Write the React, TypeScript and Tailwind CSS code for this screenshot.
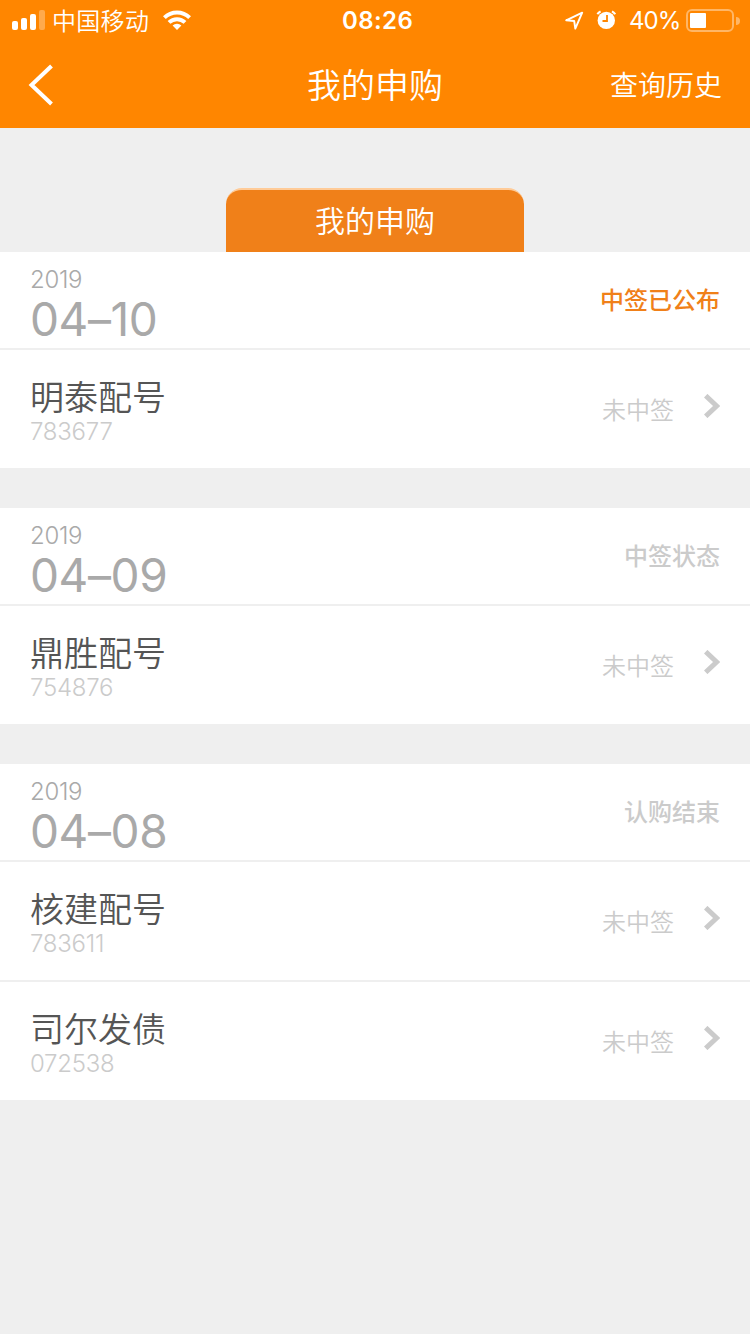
import React from "react";

type Item = {
  name: string;
  code: string;
  result: string;
};

type Group = {
  year: string;
  day: string;
  status: string;
  active?: boolean;
  items: Item[];
};

const groups: Group[] = [
  {
    year: "2019",
    day: "04–10",
    status: "中签已公布",
    active: true,
    items: [{ name: "明泰配号", code: "783677", result: "未中签" }],
  },
  {
    year: "2019",
    day: "04–09",
    status: "中签状态",
    items: [{ name: "鼎胜配号", code: "754876", result: "未中签" }],
  },
  {
    year: "2019",
    day: "04–08",
    status: "认购结束",
    items: [
      { name: "核建配号", code: "783611", result: "未中签" },
      { name: "司尔发债", code: "072538", result: "未中签" },
    ],
  },
];

function StatusBar() {
  return (
    <div className="grid h-10 grid-cols-[342px_1fr_186px] items-center">
      <div className="flex items-center pl-3">
        <svg width="33" height="20" viewBox="0 0 33 20" fill="#fff">
          <rect x="0" y="11" width="6" height="9" rx="2" />
          <rect x="9" y="8" width="6" height="12" rx="2" />
          <rect x="18" y="4" width="6" height="16" rx="2" />
          <rect x="27" y="0" width="6" height="20" rx="2" opacity="0.3" />
        </svg>
        <span className="ml-[7px] pt-1 text-2xl leading-9 font-[350] tracking-[0.3px]">
          中国移动
        </span>
        <svg className="ml-3.5" width="28" height="20" viewBox="0 0 28 20">
          <g fill="none" stroke="#fff" strokeWidth="4">
            <path d="M1.4 7.6a18 18 0 0 1 25.2 0" />
            <path d="M6 12.4a11.5 11.5 0 0 1 16 0" />
          </g>
          <path d="M14 20l-4.4-4.4a6.3 6.3 0 0 1 8.8 0z" fill="#fff" />
        </svg>
      </div>

      <div className="pt-0.5 text-2xl leading-[38px] font-semibold tracking-[0.4px]">
        08:26
      </div>

      <div className="flex items-center">
        <svg className="shrink-0" width="20" height="20" viewBox="0 0 20 20">
          <path
            d="M2.2 10.3L18.2 2.7L11.3 18.6L10.2 11Z"
            fill="none"
            stroke="#fff"
            strokeWidth="1.9"
            strokeLinejoin="round"
          />
        </svg>
        <svg
          className="ml-3 shrink-0"
          width="20"
          height="20"
          viewBox="0 0 20 20"
        >
          <circle cx="10.3" cy="10.4" r="8.7" fill="#fff" />
          <path
            d="M1.3 4.2A12 12 0 0 1 4.6 1.4M16 1.4A12 12 0 0 1 19.3 4.2"
            fill="none"
            stroke="#fff"
            strokeWidth="2"
          />
          <path
            d="M11 5V11H6.5"
            fill="none"
            stroke="#ff8600"
            strokeWidth="1.8"
          />
        </svg>
        <span className="ml-[13px] w-[57px] pt-0.5 text-2xl leading-[38px] tracking-[-1px]">
          40%
        </span>
        <svg className="shrink-0" width="54" height="24" viewBox="0 0 54 24">
          <rect
            x="1"
            y="2"
            width="46"
            height="21"
            rx="5"
            fill="none"
            stroke="#fff"
            strokeOpacity="0.4"
            strokeWidth="2"
          />
          <rect x="4" y="5" width="16" height="15" rx="1" fill="#fff" />
          <path d="M50 9a4 4 0 0 1 0 8z" fill="#fff" opacity="0.4" />
        </svg>
      </div>
    </div>
  );
}

function Header() {
  return (
    <header className="h-32 bg-[#ff8600] text-white">
      <StatusBar />
      <div className="grid h-[88px] grid-cols-[1fr_auto_1fr] items-center pt-0.5">
        <button className="pl-7">
          <svg width="26" height="42" viewBox="0 0 26 42">
            <path
              d="M23.5 2L3.5 21L23.5 40"
              fill="none"
              stroke="#fff"
              strokeWidth="4"
            />
          </svg>
        </button>
        <h1 className="pt-0.5 text-[34px] leading-[84px] font-[350]">
          我的申购
        </h1>
        <button className="pt-0.5 pr-7 text-right text-[28px] font-[350]">
          查询历史
        </button>
      </div>
    </header>
  );
}

function GroupCard({ group }: { group: Group }) {
  return (
    <section className="bg-white">
      <div className="flex h-24 items-center justify-between px-[30px]">
        <div className="pt-2.5 text-[#a9a9a9]">
          <p className="text-2xl leading-7 font-[350] tracking-[-0.3px]">
            {group.year}
          </p>
          <p className="text-[46px] leading-[50px] font-normal tracking-[-0.4px]">
            {group.day}
          </p>
        </div>
        <span
          className={
            group.active
              ? "pt-0.5 text-2xl font-medium text-[#f08019]"
              : "pt-0.5 text-2xl font-medium text-[#cbcbcb]"
          }
        >
          {group.status}
        </span>
      </div>

      {group.items.map((item) => (
        <div
          key={item.code}
          className="flex h-[120px] items-center justify-between border-t-2 border-[#efefef] px-[30px]"
        >
          <div className="pt-1.5">
            <h2 className="text-[34px] leading-10 font-[350] text-[#555]">
              {item.name}
            </h2>
            <p className="text-2xl leading-7 font-light tracking-[-0.25px] text-[#cbcbcb]">
              {item.code}
            </p>
          </div>
          <div className="flex items-center text-[#cbcbcb]">
            <span className="pt-1 text-2xl font-[350]">{item.result}</span>
            <svg
              className="mb-1.5 ml-[30px]"
              width="16"
              height="24"
              viewBox="0 0 16 24"
            >
              <path
                d="M1.7 1.7L12.6 12L1.7 22.3"
                fill="none"
                stroke="currentColor"
                strokeWidth="5"
              />
            </svg>
          </div>
        </div>
      ))}
    </section>
  );
}

export default function App() {
  return (
    <div className="min-h-screen w-[750px] bg-[#efefef] font-['Inter','Noto_Sans_CJK_SC',sans-serif]">
      <Header />
      <div className="flex justify-center pt-[60px]">
        <div className="h-16 w-[298px] rounded-t-[16px] border-t-2 border-[#ffcb98] bg-[#f08019] text-center text-[30px] leading-[62px] font-[350] text-white">
          我的申购
        </div>
      </div>
      <main className="flex flex-col gap-10">
        {groups.map((group) => (
          <GroupCard key={group.day} group={group} />
        ))}
      </main>
    </div>
  );
}
